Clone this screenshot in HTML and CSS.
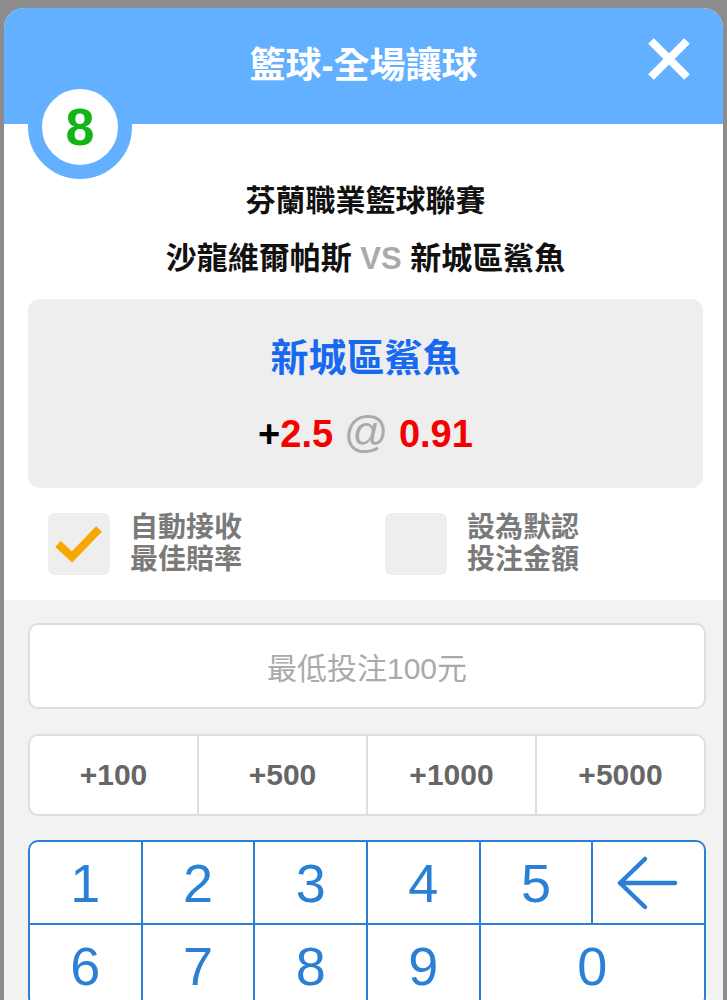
FILE: index.html
```html
<!DOCTYPE html>
<html lang="zh-Hant">
<head>
    <meta charset="UTF-8">
    <meta name="viewport" content="width=device-width, initial-scale=1.0">
    <title>籃球-全場讓球</title>
    <link rel="stylesheet" href="styles.css">
</head>
<body>

<div class="bet-modal">
    <div class="modal-header">
        <h1 class="modal-title">籃球-全場讓球</h1>
        <button class="close-btn" type="button" aria-label="關閉">
            <svg width="44" height="44" viewBox="0 0 44 44">
                <path d="M4 4 L40 40 M40 4 L4 40" stroke="#fff" stroke-width="8" fill="none"/>
            </svg>
        </button>
        <div class="slip-badge">8</div>
    </div>

    <div class="match-info">
        <p class="league">芬蘭職業籃球聯賽</p>
        <p class="teams">沙龍維爾帕斯 <span class="vs">VS</span> 新城區鯊魚</p>

        <div class="pick-box">
            <p class="pick-team">新城區鯊魚</p>
            <p class="pick-odds">+<span class="red">2.5</span> <span class="at">@</span> <span class="red">0.91</span></p>
        </div>

        <div class="options">
            <label class="option">
                <span class="check-box">
                    <svg width="62" height="62" viewBox="0 0 62 62">
                        <path d="M10 31 L24 44 L51 16" stroke="#f7a800" stroke-width="8" fill="none"/>
                    </svg>
                </span>
                <span class="option-text">自動接收<br>最佳賠率</span>
            </label>
            <label class="option">
                <span class="check-box"></span>
                <span class="option-text">設為默認<br>投注金額</span>
            </label>
        </div>
    </div>

    <div class="stake-panel">
        <div class="amount-input">最低投注100元</div>

        <div class="quick-amounts">
            <button type="button">+100</button>
            <button type="button">+500</button>
            <button type="button">+1000</button>
            <button type="button">+5000</button>
        </div>

        <div class="keypad">
            <button type="button">1</button>
            <button type="button">2</button>
            <button type="button">3</button>
            <button type="button">4</button>
            <button type="button">5</button>
            <button type="button" class="key-back" aria-label="刪除">
                <svg width="62" height="56" viewBox="0 0 62 56">
                    <path d="M29 4 L4 28 L29 52 M4 28 L59 28" stroke="#2b80d6" stroke-width="4.5" fill="none" stroke-linecap="round" stroke-linejoin="round"/>
                </svg>
            </button>
            <button type="button">6</button>
            <button type="button">7</button>
            <button type="button">8</button>
            <button type="button">9</button>
            <button type="button" class="key-zero">0</button>
        </div>
    </div>
</div>

</body>
</html>
```

FILE: styles.css
```css
body {
    margin: 0;
    background-color: #8c8c8c;
    font-family: 'Liberation Sans', 'Noto Sans CJK TC', sans-serif;
    overflow: hidden;
}

p {
    margin: 0;
}

button {
    font-family: inherit;
    border: none;
    background: none;
    padding: 0;
}

.bet-modal {
    margin: 8px 0 0 4px;
    width: 719px;
    background: #fff;
    border-radius: 20px 20px 0 0;
    overflow: hidden;
    position: relative;
}

.modal-header {
    height: 116px;
    background-color: #62b0ff;
    display: flex;
    align-items: center;
    justify-content: center;
}

.modal-title {
    margin: 0;
    color: #fff;
    font-size: 36px;
    font-weight: bold;
    line-height: 44px;
}

.close-btn {
    position: absolute;
    top: 29px;
    right: 32px;
    width: 44px;
    height: 44px;
}

.close-btn svg {
    display: block;
}

/* slip number, sits half over the header */
.slip-badge {
    position: absolute;
    left: 24px;
    top: 67px;
    width: 76px;
    height: 76px;
    border: 14px solid #62b0ff;
    border-radius: 50%;
    background: #fff;
    color: #11b51a;
    font-size: 52px;
    font-weight: bold;
    line-height: 76px;
    text-align: center;
}

.match-info {
    padding: 57px 20px 24px 24px;
    text-align: center;
}

.league {
    font-size: 30px;
    font-weight: bold;
    line-height: 40px;
    color: #111;
}

.teams {
    margin-top: 18px;
    font-size: 31px;
    font-weight: bold;
    line-height: 40px;
    color: #111;
}

.teams .vs {
    color: #aaa;
}

.pick-box {
    margin-top: 20px;
    height: 189px;
    box-sizing: border-box;
    padding-top: 35px;
    background-color: #eeeeee;
    border-radius: 12px;
}

.pick-team {
    font-size: 38px;
    font-weight: bold;
    line-height: 48px;
    color: #1769ef;
}

.pick-odds {
    margin-top: 26px;
    font-size: 38px;
    font-weight: bold;
    line-height: 48px;
    color: #000;
}

.pick-odds .red {
    color: #f40000;
}

.pick-odds .at {
    color: #aaa;
    font-size: 44px;
    font-weight: normal;
}

.options {
    margin-top: 24px;
    padding-left: 20px;
    display: flex;
    text-align: left;
}

.option {
    width: 337px;
    flex-shrink: 0;
    display: flex;
    align-items: center;
    gap: 20px;
}

.check-box {
    width: 62px;
    height: 62px;
    flex-shrink: 0;
    background-color: #eeeeee;
    border-radius: 6px;
}

.check-box svg {
    display: block;
}

.option-text {
    font-size: 28px;
    font-weight: bold;
    line-height: 32px;
    color: #7a7a7a;
}

.stake-panel {
    background-color: #f2f2f2;
    padding: 23px 17px 40px 24px;
}

.amount-input {
    height: 86px;
    box-sizing: border-box;
    background: #fff;
    border: 2px solid #dedede;
    border-radius: 10px;
    display: flex;
    align-items: center;
    justify-content: center;
    font-size: 30px;
    color: #aaa;
}

.quick-amounts {
    margin-top: 25px;
    height: 82px;
    display: grid;
    grid-template-columns: repeat(4, 1fr);
    gap: 2px;
    background-color: #dedede;
    border: 2px solid #dedede;
    border-radius: 10px;
    overflow: hidden;
    box-sizing: border-box;
}

.quick-amounts button {
    background: #fff;
    font-size: 30px;
    font-weight: bold;
    color: #666;
}

.keypad {
    margin-top: 24px;
    display: grid;
    grid-template-columns: repeat(6, 1fr);
    grid-auto-rows: 81px;
    gap: 2px;
    background-color: #2b80d6;
    border: 2px solid #2b80d6;
    border-radius: 10px;
    overflow: hidden;
}

.keypad button {
    background: #fff;
    color: #2b80d6;
    font-size: 54px;
    display: flex;
    align-items: center;
    justify-content: center;
}

.keypad .key-zero {
    grid-column: span 2;
}

.key-back svg {
    display: block;
    margin-left: -4px;
}
```
